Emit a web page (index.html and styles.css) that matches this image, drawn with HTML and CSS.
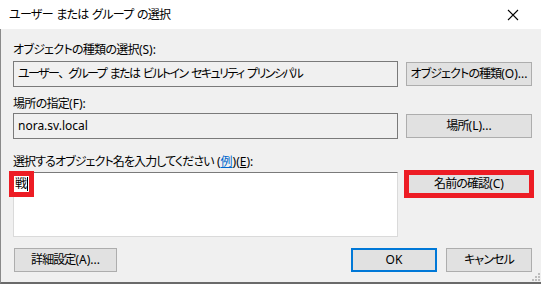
FILE: index.html
```html
<!DOCTYPE html>
<html>
<head>
  <meta charset="utf-8">
  <title>ユーザー または グループ の選択</title>
  <link rel="stylesheet" href="styles.css">
</head>
<body>
  <div class="window">
    <div class="titlebar">
      <span class="title">ユーザー または グループ の選択</span>
      <svg class="close" width="12" height="12" viewBox="0 0 12 12">
        <path d="M1 1 L11 11 M11 1 L1 11" stroke="#000" stroke-width="1.1" fill="none"/>
      </svg>
    </div>

    <div class="content">
      <div class="label first">オブジェクトの種類の選択<span class="latin">(<u>S</u>):</span></div>
      <div class="row">
        <div class="field tight">ユーザー<span class="comma">、</span>グループ または ビルトイン セキュリティ プリンシパル</div>
        <button class="btn">オブジェクトの種類<span class="latin">(<u>O</u>)...</span></button>
      </div>

      <div class="label second">場所の指定<span class="latin">(<u>F</u>):</span></div>
      <div class="row">
        <div class="field latin">nora.sv.local</div>
        <button class="btn">場所<span class="latin">(<u>L</u>)...</span></button>
      </div>

      <div class="label third">選択するオブジェクト名を入力してください <span class="latin">(<a href="#" class="link">例</a>)(<u>E</u>):</span></div>
      <div class="row top">
        <div class="names">
          <span class="mark">戦<span class="caret"></span></span>
        </div>
        <button class="btn check">名前の確認<span class="latin">(<u>C</u>)</span></button>
      </div>

      <div class="footer">
        <button class="btn advanced">詳細設定<span class="latin">(<u>A</u>)...</span></button>
        <div class="actions">
          <button class="btn ok latin">OK</button>
          <button class="btn cancel">キャンセル</button>
        </div>
      </div>
    </div>

    <svg class="grip" width="8" height="8" viewBox="0 0 8 8">
      <rect x="6" y="0" width="2" height="2" fill="#bdbdbd"/>
      <rect x="3" y="3" width="2" height="2" fill="#bdbdbd"/>
      <rect x="6" y="3" width="2" height="2" fill="#bdbdbd"/>
      <rect x="0" y="6" width="2" height="2" fill="#bdbdbd"/>
      <rect x="3" y="6" width="2" height="2" fill="#bdbdbd"/>
      <rect x="6" y="6" width="2" height="2" fill="#bdbdbd"/>
    </svg>
  </div>
</body>
</html>
```

FILE: styles.css
```css
* {
    box-sizing: border-box;
}
body {
    margin: 0;
    font-family: "Noto Sans", "Noto Sans CJK JP", sans-serif;
    font-size: 12px;
    font-feature-settings: "palt";
    letter-spacing: -0.7px;
    word-spacing: 1px;
    color: #000;
}
u {
    text-decoration: none;
}
.latin {
    letter-spacing: 0;
}
.window {
    position: relative;
    width: 541px;
    height: 284px;
    background: #f0f0f0;
    display: flex;
    flex-direction: column;
}
.titlebar {
    height: 29px;
    background: #fff;
    display: flex;
    align-items: center;
    justify-content: space-between;
    padding: 0 22px 0 9px;
}
.title {
    font-size: 12px;
    line-height: 14px;
}
.content {
    flex: 1;
    border-left: 1px solid #8a8a8a;
    border-bottom: 2px solid #6a6a6a;
    padding: 0 9px 0 12px;
    display: flex;
    flex-direction: column;
}
.label {
    line-height: 14px;
    height: 14px;
    white-space: nowrap;
}
.label.first {
    margin-top: 14px;
    margin-bottom: 4px;
}
.label.second {
    margin-top: 10px;
    margin-bottom: 2px;
}
.label.third {
    margin-top: 16px;
    margin-bottom: 3px;
    letter-spacing: -0.9px;
}
.label.third .latin {
    letter-spacing: 0;
}
.label.third u {
    text-decoration: underline;
}
.link {
    color: #0066cc;
    text-decoration: underline;
}
.row {
    display: flex;
    align-items: center;
    gap: 8px;
}
.row.top {
    align-items: flex-start;
}
.field {
    width: 385px;
    height: 26px;
    border: 1px solid #7a7a7a;
    background: #f0f0f0;
    padding: 0 4px;
    line-height: 24px;
    white-space: nowrap;
    overflow: hidden;
}
.field.tight {
    letter-spacing: -1.6px;
    word-spacing: 2px;
}
.comma {
    font-feature-settings: normal;
    letter-spacing: -2px;
}
.btn {
    font-family: inherit;
    font-size: 12px;
    font-feature-settings: "palt";
    letter-spacing: -0.9px;
    white-space: nowrap;
    color: #000;
    width: 126px;
    height: 24px;
    background: #e1e1e1;
    border: 1px solid #adadad;
    padding: 0;
    line-height: 22px;
}
.btn .latin {
    letter-spacing: 0;
}
.names {
    width: 385px;
    height: 65px;
    background: #fff;
    border: 1px solid #dadada;
    border-top: 1px solid #7a7a7a;
    padding-top: 3px;
}
.mark {
    display: flex;
    align-items: center;
    width: 15px;
    height: 16px;
    padding-left: 1px;
    outline: 5px solid #ed1c24;
    line-height: 16px;
}
.caret {
    display: inline-block;
    width: 1px;
    height: 14px;
    background: #000;
    margin-left: 1px;
}
.check {
    outline: 5px solid #ed1c24;
    outline-offset: -3px;
}
.footer {
    display: flex;
    justify-content: space-between;
    margin-top: 11px;
}
.advanced {
    width: 103px;
    margin-left: 1px;
}
.actions {
    display: flex;
    gap: 9px;
}
.ok {
    width: 86px;
    border: 2px solid #0078d7;
    line-height: 20px;
    letter-spacing: 0;
}
.cancel {
    width: 86px;
}
.grip {
    position: absolute;
    right: 1px;
    bottom: 3px;
}
```
